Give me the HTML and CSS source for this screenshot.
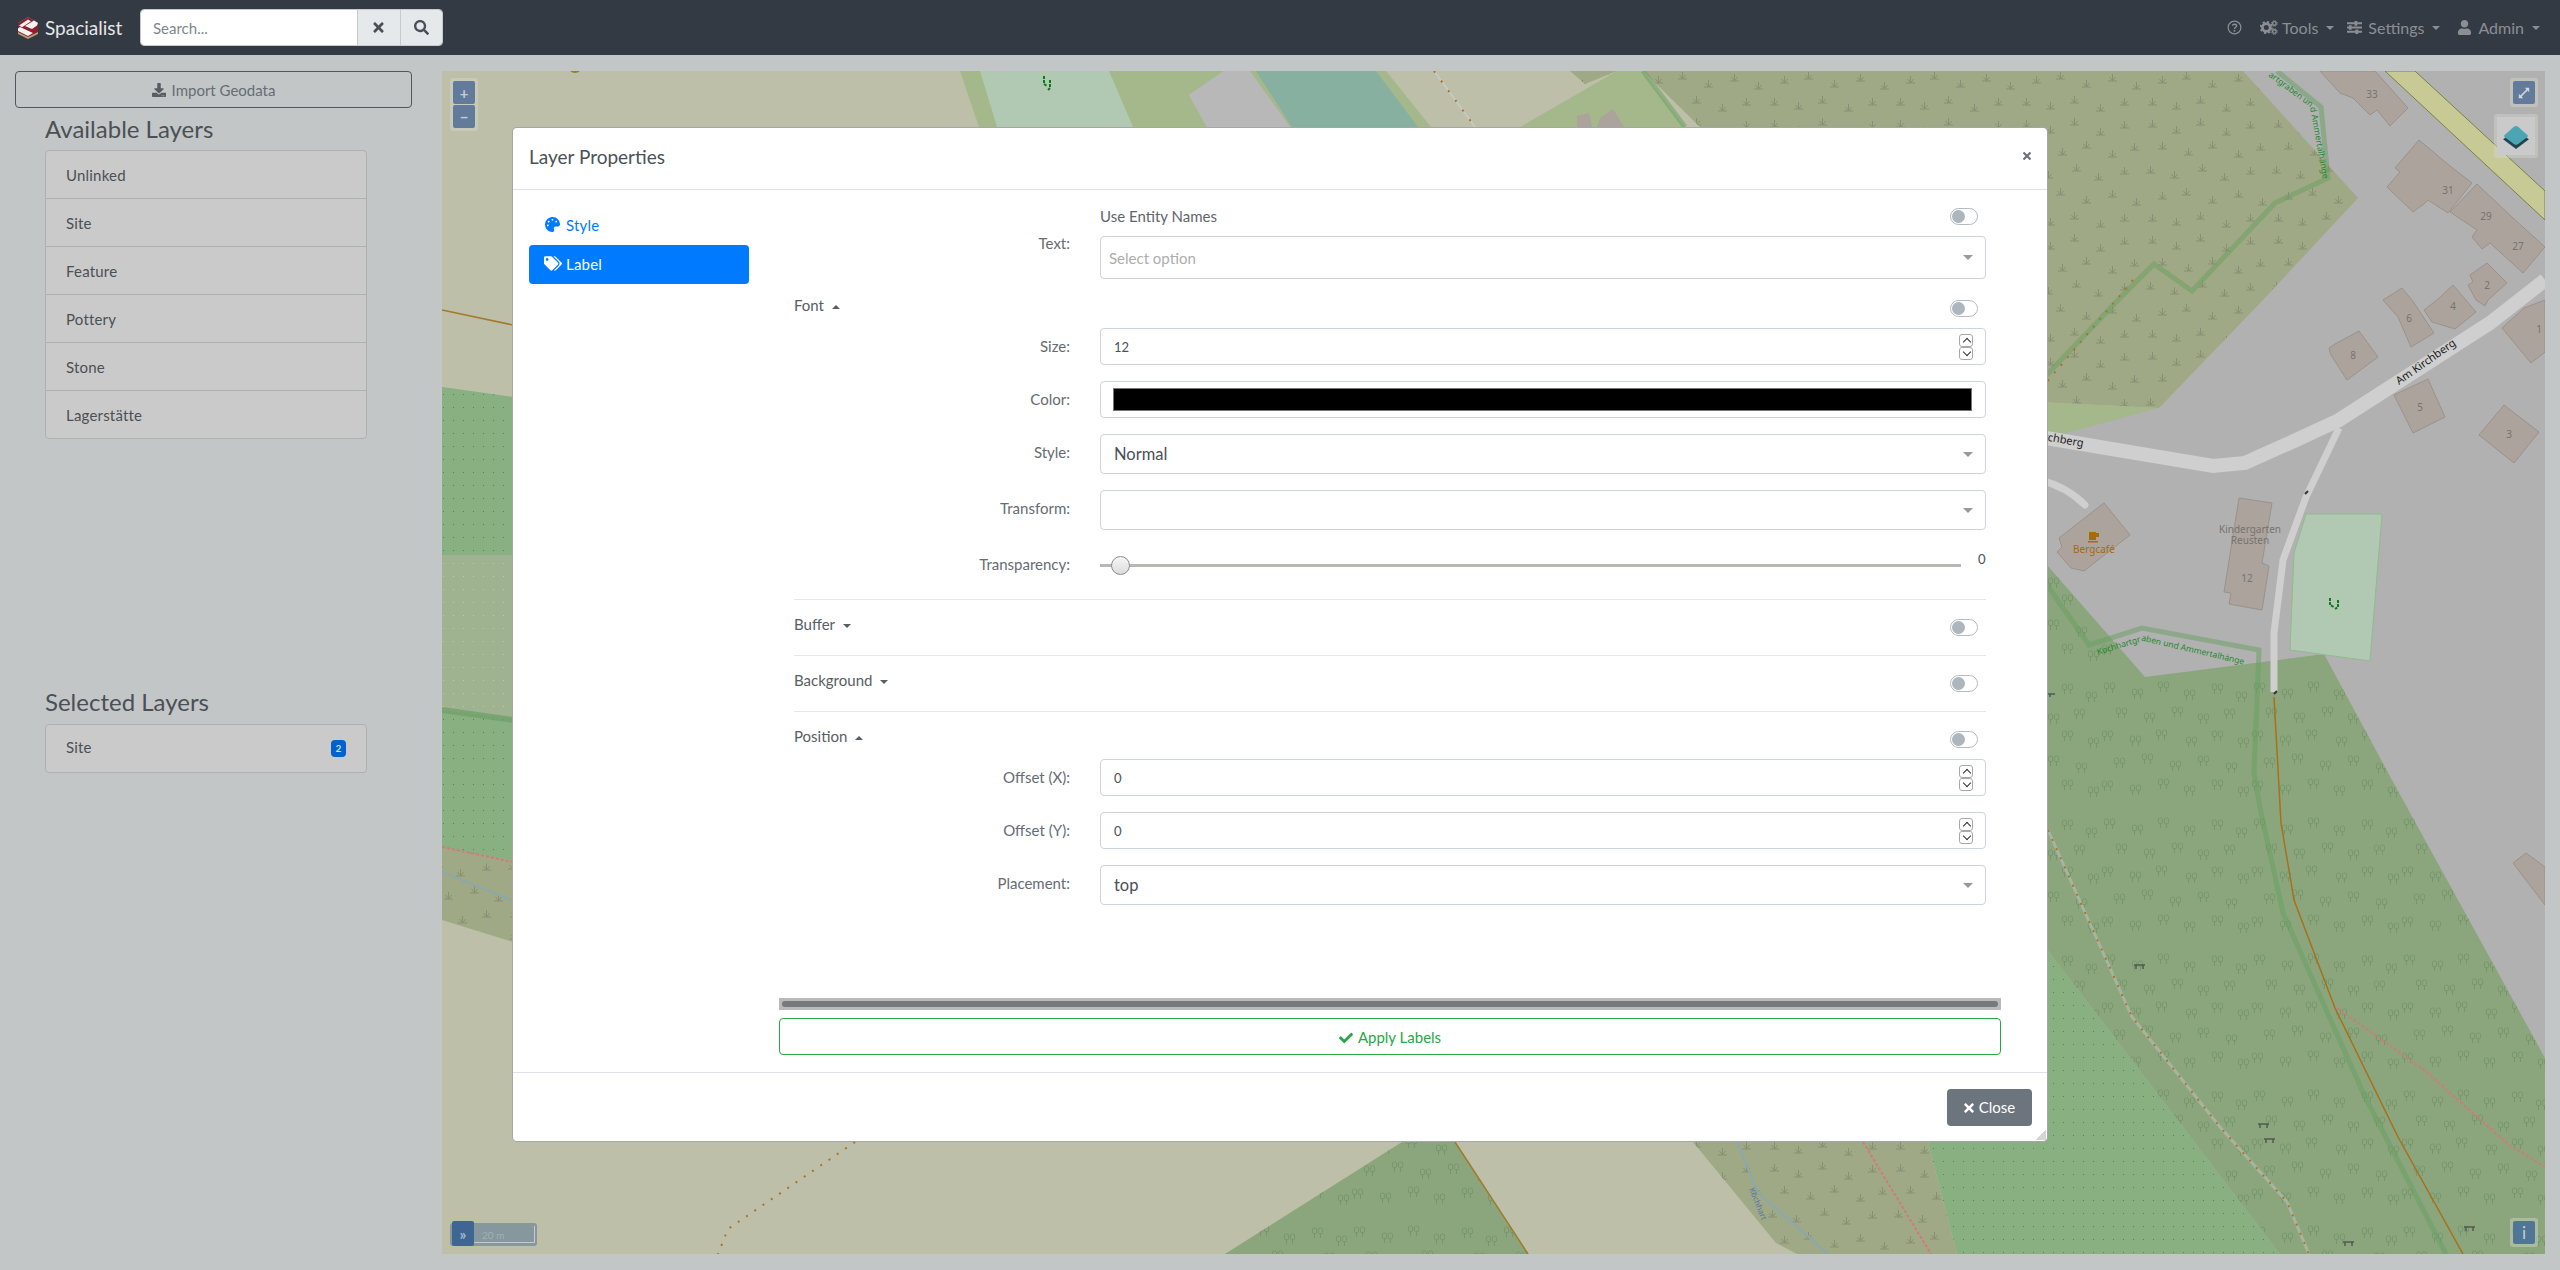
FILE: index.html
```html
<!DOCTYPE html>
<html lang="en">
<head>
    <meta charset="UTF-8">
    <meta name="viewport" content="width=device-width, initial-scale=1.0">
    <title>Spacialist</title>
    <link rel="stylesheet" href="styles.css">
</head>
<body>
    <svg class="icon-defs" width="0" height="0">
        <symbol id="i-times" viewBox="0 0 352 512"><path d="M242.72 256l100.07-100.07c12.28-12.28 12.28-32.19 0-44.48l-22.24-22.24c-12.28-12.28-32.19-12.28-44.48 0L176 189.28 75.93 89.21c-12.28-12.28-32.19-12.28-44.48 0L9.21 111.45c-12.28 12.28-12.28 32.19 0 44.48L109.28 256 9.21 356.07c-12.28 12.28-12.28 32.19 0 44.48l22.24 22.24c12.28 12.28 32.2 12.28 44.48 0L176 322.72l100.07 100.07c12.28 12.28 32.2 12.28 44.48 0l22.24-22.24c12.28-12.28 12.28-32.19 0-44.48L242.72 256z"/></symbol>
        <symbol id="i-search" viewBox="0 0 512 512"><path d="M505 442.7L405.3 343c-4.5-4.5-10.6-7-17-7H372c27.6-35.3 44-79.7 44-128C416 93.1 322.9 0 208 0S0 93.1 0 208s93.1 208 208 208c48.3 0 92.7-16.4 128-44v16.3c0 6.4 2.5 12.5 7 17l99.7 99.7c9.4 9.4 24.6 9.4 33.9 0l28.3-28.3c9.4-9.4 9.4-24.6.1-34zM208 336c-70.7 0-128-57.2-128-128 0-70.7 57.2-128 128-128 70.7 0 128 57.2 128 128 0 70.7-57.2 128-128 128z"/></symbol>
        <symbol id="i-check" viewBox="0 0 512 512"><path d="M173.898 439.404l-166.4-166.4c-9.997-9.997-9.997-26.206 0-36.204l36.203-36.204c9.997-9.998 26.207-9.998 36.204 0L192 312.69 432.095 72.596c9.997-9.997 26.207-9.997 36.204 0l36.203 36.204c9.997 9.997 9.997 26.206 0 36.204l-294.4 294.401c-9.998 9.997-26.207 9.997-36.204-.001z"/></symbol>
        <symbol id="i-user" viewBox="0 0 448 512"><path d="M224 256c70.7 0 128-57.3 128-128S294.7 0 224 0 96 57.3 96 128s57.3 128 128 128zm89.6 32h-16.7c-22.2 10.2-46.9 16-72.9 16s-50.6-5.8-72.9-16h-16.7C60.2 288 0 348.2 0 422.4V464c0 26.5 21.5 48 48 48h352c26.5 0 48-21.5 48-48v-41.6c0-74.2-60.2-134.4-134.4-134.4z"/></symbol>
        <symbol id="i-download" viewBox="0 0 512 512"><path d="M216 0h80c13.3 0 24 10.7 24 24v168h87.7c17.8 0 26.7 21.5 14.1 34.1L269.7 378.3c-7.5 7.5-19.8 7.5-27.3 0L90.1 226.1c-12.6-12.6-3.7-34.1 14.1-34.1H192V24c0-13.3 10.7-24 24-24zm296 376v112c0 13.3-10.7 24-24 24H24c-13.3 0-24-10.7-24-24V376c0-13.3 10.7-24 24-24h146.7l49 49c20.1 20.1 52.5 20.1 72.6 0l49-49H488c13.3 0 24 10.7 24 24zm-124 88c0-11-9-20-20-20s-20 9-20 20 9 20 20 20 20-9 20-20zm64 0c0-11-9-20-20-20s-20 9-20 20 9 20 20 20 20-9 20-20z"/></symbol>
        <symbol id="i-palette" viewBox="0 0 512 512"><path d="M204.3 5C104.9 24.4 24.8 104.3 5.2 203.4c-37 187 131.7 326.4 258.8 306.7 41.2-6.4 61.4-54.6 42.5-91.7-23.1-45.4 9.9-98.4 60.9-98.4h79.7c35.8 0 64.8-29.6 64.9-65.3C511.5 97.1 368.1-26.9 204.3 5zM96 320c-17.7 0-32-14.3-32-32s14.3-32 32-32 32 14.3 32 32-14.3 32-32 32zm32-128c-17.7 0-32-14.3-32-32s14.3-32 32-32 32 14.3 32 32-14.3 32-32 32zm128-64c-17.7 0-32-14.3-32-32s14.3-32 32-32 32 14.3 32 32-14.3 32-32 32zm128 64c-17.7 0-32-14.3-32-32s14.3-32 32-32 32 14.3 32 32-14.3 32-32 32z"/></symbol>
        <symbol id="i-tags" viewBox="0 0 640 512"><path d="M497.941 225.941L286.059 14.059A48 48 0 0 0 252.118 0H48C21.49 0 0 21.49 0 48v204.118a48 48 0 0 0 14.059 33.941l211.882 211.882c18.744 18.745 49.136 18.746 67.882 0l204.118-204.118c18.745-18.745 18.745-49.137 0-67.882zM112 160c-26.51 0-48-21.49-48-48s21.49-48 48-48 48 21.49 48 48-21.49 48-48 48zm513.941 133.823L421.823 497.941c-18.745 18.745-49.137 18.745-67.882 0l-.36-.36L527.64 323.522c16.999-16.999 26.36-39.6 26.36-63.64s-9.362-46.641-26.36-63.64L331.397 0h48.721a48 48 0 0 1 33.941 14.059l211.882 211.882c18.745 18.745 18.745 49.137 0 67.882z"/></symbol>
        <symbol id="i-sliders" viewBox="0 0 16 14"><path d="M0 1.5h8V0h3v1.5h5v2h-5V5H8V3.500H0zM0 6h2V4.700h3V6h11v2H5v1.300H2V8H0zM0 10.500h9V9.200h3v1.300h4v2h-4V14H9v-1.500H0z"/></symbol>
        <symbol id="i-cogs" viewBox="0 0 20 16">
            <circle cx="7" cy="8" r="4.300" fill="none" stroke="currentColor" stroke-width="3"/>
            <circle cx="7" cy="8" r="6.300" fill="none" stroke="currentColor" stroke-width="2" stroke-dasharray="2.400 2.550"/>
            <circle cx="16" cy="3.500" r="2" fill="none" stroke="currentColor" stroke-width="1.500"/>
            <circle cx="16" cy="3.500" r="3.200" fill="none" stroke="currentColor" stroke-width="1" stroke-dasharray="1.400 1.110"/>
            <circle cx="16" cy="12.500" r="2" fill="none" stroke="currentColor" stroke-width="1.500"/>
            <circle cx="16" cy="12.500" r="3.200" fill="none" stroke="currentColor" stroke-width="1" stroke-dasharray="1.400 1.110"/>
        </symbol>
    </svg>

    <header class="navbar">
        <a class="brand">
            <svg class="logo" viewBox="0 0 20 22">
                <path d="M10 0L20 6v11l-10 5L0 17V6z" fill="#b8a06e"/>
                <path d="M10 0L20 6v9l-10 5L0 15V6z" fill="#8e1f31"/>
                <path d="M1 8.500L10 2.500l3 1.800L4 10.300zM0 11.500L2 10l13 6-5 3-10-5zM7 9l9-5.500 4 2.500-1 2.500-5 3.500z" fill="#f4f2ee"/>
            </svg>
            Spacialist
        </a>
        <div class="search-box">
            <input class="search-input" type="text" placeholder="Search...">
            <button class="search-btn"><svg class="icon"><use href="#i-times"/></svg></button>
            <button class="search-btn"><svg class="icon"><use href="#i-search"/></svg></button>
        </div>
        <nav class="nav-right">
            <a class="nav-item nav-help">
                <svg class="nav-icon" viewBox="0 0 16 16"><circle cx="8" cy="8" r="6.800" fill="none" stroke="currentColor" stroke-width="1.300"/><path d="M5.800 6.200C6 3.900 10.200 3.900 10.200 6.200 10.200 7.800 8 7.700 8 9.600" fill="none" stroke="currentColor" stroke-width="1.500"/><rect x="7.100" y="10.600" width="1.800" height="1.800"/></svg>
            </a>
            <a class="nav-item nav-tools"><svg class="nav-icon nav-icon-wide"><use href="#i-cogs"/></svg>Tools<span class="caret"></span></a>
            <a class="nav-item nav-settings"><svg class="nav-icon"><use href="#i-sliders"/></svg>Settings<span class="caret"></span></a>
            <a class="nav-item"><svg class="nav-icon nav-icon-user"><use href="#i-user"/></svg>Admin<span class="caret"></span></a>
        </nav>
    </header>

    <main class="page">
        <aside class="sidebar">
            <button class="import-btn"><svg class="icon"><use href="#i-download"/></svg>Import Geodata</button>
            <section class="layers">
                <h4>Available Layers</h4>
                <ul class="layer-list">
                    <li>Unlinked</li>
                    <li>Site</li>
                    <li>Feature</li>
                    <li>Pottery</li>
                    <li>Stone</li>
                    <li>Lagerstätte</li>
                </ul>
            </section>
            <section class="layers layers-selected">
                <h4>Selected Layers</h4>
                <ul class="layer-list">
                    <li>Site<span class="badge">2</span></li>
                </ul>
            </section>
        </aside>

        <div class="map">
            <!-- map tiles, coordinates are page pixels -->
            <svg class="map-canvas" viewBox="442 71 2103 1183" preserveAspectRatio="none">
                <defs>
                    <g id="tuft"><path d="M0 7h9M4.500 7V0M4.500 7L1.500 3M4.500 7L7.500 3" fill="none" stroke="#879074" stroke-width="1"/></g>
                    <g id="tree"><path d="M2.500 11V6M8.500 11V6" fill="none" stroke="#76966c"/><ellipse cx="2.500" cy="4" rx="2.300" ry="3.200" fill="none" stroke="#76966c"/><ellipse cx="8.500" cy="4" rx="2.300" ry="3.200" fill="none" stroke="#76966c"/></g>
                    <pattern id="scrub" width="126" height="116" patternUnits="userSpaceOnUse">
                        <use href="#tuft" x="6" y="4"/><use href="#tuft" x="30" y="10"/><use href="#tuft" x="54" y="2"/><use href="#tuft" x="80" y="12"/><use href="#tuft" x="104" y="5"/>
                        <use href="#tuft" x="16" y="26"/><use href="#tuft" x="42" y="32"/><use href="#tuft" x="66" y="25"/><use href="#tuft" x="92" y="34"/><use href="#tuft" x="114" y="27"/>
                        <use href="#tuft" x="4" y="50"/><use href="#tuft" x="28" y="55"/><use href="#tuft" x="56" y="48"/><use href="#tuft" x="78" y="57"/><use href="#tuft" x="104" y="51"/>
                        <use href="#tuft" x="16" y="76"/><use href="#tuft" x="40" y="72"/><use href="#tuft" x="66" y="80"/><use href="#tuft" x="92" y="74"/><use href="#tuft" x="116" y="82"/>
                        <use href="#tuft" x="6" y="98"/><use href="#tuft" x="30" y="102"/><use href="#tuft" x="54" y="96"/><use href="#tuft" x="80" y="104"/><use href="#tuft" x="104" y="98"/>
                    </pattern>
                    <pattern id="forest" width="150" height="136" patternUnits="userSpaceOnUse">
                        <use href="#tree" x="4" y="2"/><use href="#tree" x="32" y="8"/><use href="#tree" x="58" y="1"/><use href="#tree" x="84" y="9"/><use href="#tree" x="112" y="3"/><use href="#tree" x="136" y="11"/>
                        <use href="#tree" x="16" y="27"/><use href="#tree" x="44" y="32"/><use href="#tree" x="72" y="26"/><use href="#tree" x="98" y="33"/><use href="#tree" x="124" y="28"/>
                        <use href="#tree" x="2" y="50"/><use href="#tree" x="30" y="55"/><use href="#tree" x="56" y="49"/><use href="#tree" x="86" y="56"/><use href="#tree" x="112" y="50"/><use href="#tree" x="138" y="57"/>
                        <use href="#tree" x="14" y="77"/><use href="#tree" x="42" y="73"/><use href="#tree" x="70" y="80"/><use href="#tree" x="98" y="75"/><use href="#tree" x="126" y="82"/>
                        <use href="#tree" x="2" y="100"/><use href="#tree" x="30" y="104"/><use href="#tree" x="58" y="98"/><use href="#tree" x="84" y="105"/><use href="#tree" x="112" y="99"/><use href="#tree" x="138" y="106"/>
                    </pattern>
                    <pattern id="dots" width="10" height="13" patternUnits="userSpaceOnUse">
                        <rect x="3" y="4" width="1" height="1" fill="#5d7f5b"/>
                    </pattern>
                    <pattern id="dots-light" width="10" height="13" patternUnits="userSpaceOnUse">
                        <rect x="3" y="4" width="1" height="1" fill="#bccab0"/>
                    </pattern>
                </defs>

                <rect x="442" y="71" width="2103" height="1183" fill="#bdbfa9"/>
                <rect x="2040" y="71" width="505" height="1183" fill="#b1b1b1"/>

                <!-- left of the modal -->
                <path d="M442 387L513 397V1000H442z" fill="#88b080"/>
                <path d="M442 387L513 397V560H442z" fill="url(#dots)"/>
                <path d="M442 555H513V718L442 710z" fill="#9fb391"/>
                <path d="M442 555H513V718L442 710z" fill="url(#dots-light)"/>
                <path d="M442 710L513 718V860L442 847z" fill="url(#dots)"/>
                <path d="M442 847L513 860V942L442 920z" fill="#a0a985"/>
                <path d="M442 847L513 860V942L442 920z" fill="url(#scrub)"/>
                <path d="M513 942V1000H442V920z" fill="#bdbfa9"/>
                <path d="M442 710L513 720" stroke="#6fa068" stroke-width="6" stroke-opacity=".7" fill="none"/>
                <path d="M442 872L513 901" stroke="#8aa8b0" stroke-width="2" fill="none"/>
                <path d="M442 847L513 862" stroke="#d07a7a" stroke-width="2" stroke-dasharray="3 2" fill="none"/>
                <path d="M442 310L513 325" stroke="#a27a2c" stroke-width="1.500" fill="none"/>

                <!-- strip above the modal -->
                <path d="M960 71H1224L1189 95 1207 127H979z" fill="#a4b88b"/>
                <path d="M980 71H1109L1133 127H997z" fill="#b1c9b2"/>
                <path d="M1224 71H1256L1292 127H1207L1189 95z" fill="#b8b8b8"/>
                <path d="M1250 71H1386L1431 127H1290z" fill="#a4b88b"/>
                <path d="M1256 71H1376L1418 127H1292z" fill="#88b0a0"/>
                <path d="M1434 71L1475 127" stroke="#c9c9c0" stroke-width="2" fill="none"/>
                <path d="M1434 71L1475 127" stroke="#a9732b" stroke-width="2" stroke-dasharray="2 10" fill="none"/>
                <path d="M1617 71H1643L1685 127H1520z" fill="#a4b88b"/>
                <path d="M1570 71H1617L1585 84z" fill="#a0a985"/>
                <path d="M1577 116L1589 113 1592 127H1577zM1597 127L1600 118 1613 109 1624 127z" fill="#aca39c"/>
                <path d="M1044 76v8l3 2M1050 80v8l-2 2" stroke="#0d7a1e" stroke-width="2" stroke-dasharray="3 1" fill="none"/>

                <!-- scrub on the right -->
                <path d="M1643 71H2243L2358 198 2263 300 2159 408 2040 402 1700 127z" fill="#a0a985"/>
                <path d="M1643 71H2243L2358 198 2263 300 2159 408 2040 402 1700 127zM1570 71H1617L1585 84z" fill="url(#scrub)"/>
                <path d="M2040 402L2159 408 2040 440z" fill="#a4b88b"/>

                <!-- forest and meadow -->
                <path d="M2040 557L2145 677 2324 654 2392 780 2545 1058V1254H2280L2040 940z" fill="#8ba67d"/>
                <path d="M2040 557L2145 677 2324 654 2392 780 2545 1058V1254H2280L2040 940z" fill="url(#forest)"/>
                <path d="M2040 940L2280 1254H1957L1928 1142H2040z" fill="#88b080"/>
                <path d="M2040 940L2280 1254H1957L1928 1142H2040z" fill="url(#dots)"/>

                <!-- strip below the modal -->
                <path d="M1693 1142H1928L1957 1254H1797L1776 1243z" fill="#a0a985"/>
                <path d="M1693 1142H1928L1957 1254H1797L1776 1243z" fill="url(#scrub)"/>
                <path d="M1402 1142H1455L1528 1254H1225z" fill="#8ba67d"/>
                <path d="M1402 1142H1455L1528 1254H1225z" fill="url(#forest)"/>
                <path d="M1455 1142L1528 1254" stroke="#a27a2c" stroke-width="1.500" fill="none"/>
                <path d="M1737 1142L1758 1193 1828 1254" stroke="#8aa8b0" stroke-width="2" fill="none"/>
                <path d="M1863 1142L1931 1254" stroke="#d07a7a" stroke-width="2" stroke-dasharray="3 2" fill="none"/>
                <path d="M855 1142L728 1229 718 1254" stroke="#a9732b" stroke-width="2" stroke-dasharray="2 8" fill="none"/>
                <text class="map-label map-label-water" transform="translate(1749 1189) rotate(68)">Kochhart</text>

                <!-- roads -->
                <path d="M2385 71H2415L2545 191V220z" fill="#c8ca95" stroke="#7d7f48" stroke-width="1"/>
                <path d="M2040 437L2213 466 2245 463 2294 441 2339 420 2490 323 2545 280" stroke="#cfcfcf" stroke-width="14" fill="none"/>
                <path d="M2040 480C2060 485 2075 495 2085 505" stroke="#cfcfcf" stroke-width="7" stroke-linecap="round" fill="none"/>
                <path d="M2339 428L2306 497 2283 560 2274 633V692" stroke="#cfcfcf" stroke-width="7" fill="none"/>
                <path d="M2274 697L2281 823 2294 900 2335 1008 2398 1137 2463 1254" stroke="#a8701e" stroke-width="1.500" fill="none"/>
                <path d="M2337 1008L2424 1070 2509 1145 2545 1167" stroke="#d07a7a" stroke-width="2" stroke-dasharray="3 2" fill="none"/>
                <path d="M2048 830L2087 917 2132 1017 2220 1127 2287 1202 2309 1254" stroke="#a8b3a0" stroke-width="3" fill="none"/>
                <path d="M2048 830L2087 917 2132 1017 2220 1127 2287 1202 2309 1254" stroke="#a9732b" stroke-width="2" stroke-dasharray="2 8" fill="none"/>

                <!-- nature reserve line -->
                <g class="reserve-line">
                    <path d="M2277 71L2321 107 2328 178 2275 203 2192 291 2154 264 2120 298 2040 382"/>
                    <path d="M2040 575L2089 645 2142 628 2259 650 2254 773 2261 813 2283 913 2365 1097 2446 1254"/>
                    <path d="M1643 71L1685 127"/>
                </g>
                <path d="M2133 280L2040 390" stroke="#a9732b" stroke-width="2" stroke-dasharray="2 8" fill="none"/>

                <path d="M2306 514H2382L2370 661 2290 650 2294 553z" fill="#b1c9b2" stroke="#8fbb8f"/>

                <!-- buildings -->
                <g class="buildings">
                    <path d="M2320 71L2340 93 2353 98 2370 115 2377 110 2390 126 2408 108 2375 71z"/>
                    <path d="M2419 140L2450 166 2472 183 2448 213 2428 200 2425 203 2413 212 2387 187 2400 172 2395 168z"/>
                    <path d="M2477 184L2513 218 2545 247 2523 273 2490 243 2482 249 2472 237 2477 230 2450 212z"/>
                    <path d="M2487 263L2507 283 2488 300 2485 306 2476 300 2468 285 2473 282 2470 275z"/>
                    <path d="M2402 288L2412 300 2434 333 2411 347 2398 317 2383 300z"/>
                    <path d="M2453 285L2476 312 2455 329 2432 322 2424 310 2437 300z"/>
                    <path d="M2502 328L2524 308 2545 300V352L2531 363z"/>
                    <path d="M2359 331L2378 357 2347 380 2331 355 2329 348 2335 344z"/>
                    <path d="M2428 379L2445 417 2413 433 2394 395z"/>
                    <path d="M2504 405L2539 432 2514 463 2479 435z"/>
                    <path d="M2104 503L2130 535 2084 571 2071 568 2057 552 2062 547 2059 538z"/>
                    <path d="M2239 498L2272 503 2262 563 2269 566 2262 610 2229 604 2231 593 2224 592z"/>
                    <path d="M2526 853L2545 867V905L2513 863z"/>
                </g>
                <g class="map-label map-label-house">
                    <text x="2372" y="98">33</text><text x="2448" y="194">31</text><text x="2486" y="220">29</text>
                    <text x="2518" y="250">27</text><text x="2487" y="289">2</text><text x="2409" y="322">6</text>
                    <text x="2453" y="310">4</text><text x="2539" y="333">1</text><text x="2353" y="359">8</text>
                    <text x="2420" y="411">5</text><text x="2509" y="438">3</text><text x="2247" y="582">12</text>
                    <text x="2250" y="533">Kindergarten</text><text x="2250" y="544">Reusten</text>
                </g>
                <text class="map-label map-label-road" transform="translate(2399 385) rotate(-35)">Am Kirchberg</text>
                <text class="map-label map-label-road" text-anchor="end" transform="translate(2083 447) rotate(10)">Am Kirchberg</text>
                <path id="reserve-a" d="M2098 655L2143 641 2250 666" fill="none"/>
                <path id="reserve-b" d="M2268 76L2310 107 2323 180" fill="none"/>
                <text class="map-label map-label-reserve"><textPath href="#reserve-a">Kochhartgraben und Ammertalhänge</textPath></text>
                <text class="map-label map-label-reserve"><textPath href="#reserve-b">artgraben und Ammertalhänge</textPath></text>

                <!-- cafe -->
                <path d="M2089 532h7v8h-7zM2088 541h10v1.500h-10zM2096 533h3v4h-3z" fill="#a8690f"/>
                <text class="map-label map-label-cafe" x="2094" y="553">Bergcafé</text>

                <!-- small symbols -->
                <g class="benches">
                    <path d="M2134 965h11M2136 965v4M2143 965v4"/><path d="M2258 1124h11M2260 1124v4M2267 1124v4"/>
                    <path d="M2264 1139h11M2266 1139v4M2273 1139v4"/><path d="M2464 1227h11M2466 1227v4M2473 1227v4"/>
                    <path d="M2343 1242h11M2345 1242v4M2352 1242v4"/><path d="M2047 694h8M2050 694v3"/>
                </g>
                <path d="M2330 598v7l4 2M2338 600v7l-3 2" stroke="#0d7a1e" stroke-width="2" stroke-dasharray="3 1" fill="none"/>
                <circle cx="575" cy="66" r="7" fill="#8c8818"/>
                <circle cx="2410" cy="1261" r="7" fill="#8c8818"/>
                <path d="M2305 494l3-3M2274 694l3-3" stroke="#333" stroke-width="2"/>
            </svg>

            <div class="map-ctrl map-zoom">
                <button class="map-btn">+</button>
                <button class="map-btn">−</button>
            </div>
            <div class="map-ctrl map-full">
                <button class="map-btn">
                    <svg viewBox="0 0 14 14" class="map-btn-icon"><path d="M8 1h5v5L11.200 4.200 4.200 11.200 6 13H1V8l1.800 1.800 7-7z"/></svg>
                </button>
            </div>
            <div class="map-ctrl map-layers">
                <div class="map-layers-inner">
                    <svg viewBox="0 0 26 26" class="map-layers-icon">
                        <path d="M13 8L25 16 13 25 1 16z" fill="#1e4452"/>
                        <path d="M3 11.500L11 4.500Q13 3 15 4.500L23 11.500Q25 13 23 14.500L15 20.500Q13 22 11 20.500L3 14.500Q1 13 3 11.500z" fill="#4ba5b3"/>
                    </svg>
                </div>
            </div>
            <div class="map-ctrl map-info"><button class="map-btn map-btn-dark">i</button></div>
            <div class="map-scale">
                <button class="map-scale-btn">»</button>
                <span class="map-scale-text">20 m</span>
            </div>
        </div>
    </main>

    <!-- Layer Properties dialog -->
    <div class="modal">
        <div class="modal-header">
            <h5>Layer Properties</h5>
            <svg class="modal-close"><use href="#i-times"/></svg>
        </div>
        <div class="modal-body">
            <ul class="pills">
                <li class="pill"><svg class="icon"><use href="#i-palette"/></svg>Style</li>
                <li class="pill active"><svg class="icon icon-tags"><use href="#i-tags"/></svg>Label</li>
            </ul>
            <div class="tab">
                <div class="tab-scroll">
                    <div class="form-row form-row-entity">
                        <span class="form-label"></span>
                        <div class="form-control-plain">
                            <span class="entity-text">Use Entity Names</span>
                            <span class="toggle"></span>
                        </div>
                    </div>
                    <div class="form-row form-row-text">
                        <label class="form-label">Text:</label>
                        <div class="input select select-tall"><span class="placeholder">Select option</span><span class="arrow"></span></div>
                    </div>

                    <div class="section-head section-head-open">
                        <span class="section-title">Font<span class="caret caret-up"></span></span>
                        <span class="toggle"></span>
                    </div>
                    <div class="form-row">
                        <label class="form-label">Size:</label>
                        <div class="input number">12<span class="spinner"><i class="up"></i><i class="down"></i></span></div>
                    </div>
                    <div class="form-row">
                        <label class="form-label">Color:</label>
                        <div class="input color"><span class="color-swatch"></span></div>
                    </div>
                    <div class="form-row form-row-select">
                        <label class="form-label">Style:</label>
                        <div class="input select"><span>Normal</span><span class="arrow"></span></div>
                    </div>
                    <div class="form-row form-row-select">
                        <label class="form-label">Transform:</label>
                        <div class="input select"><span></span><span class="arrow"></span></div>
                    </div>
                    <div class="form-row form-row-slider">
                        <label class="form-label">Transparency:</label>
                        <div class="slider"><span class="slider-track"><span class="slider-thumb"></span></span><span class="slider-value">0</span></div>
                    </div>

                    <hr>
                    <div class="section-head"><span class="section-title">Buffer<span class="caret"></span></span><span class="toggle"></span></div>
                    <hr>
                    <div class="section-head"><span class="section-title">Background<span class="caret"></span></span><span class="toggle"></span></div>
                    <hr>
                    <div class="section-head section-head-open"><span class="section-title">Position<span class="caret caret-up"></span></span><span class="toggle"></span></div>
                    <div class="form-row">
                        <label class="form-label">Offset (X):</label>
                        <div class="input number">0<span class="spinner"><i class="up"></i><i class="down"></i></span></div>
                    </div>
                    <div class="form-row">
                        <label class="form-label">Offset (Y):</label>
                        <div class="input number">0<span class="spinner"><i class="up"></i><i class="down"></i></span></div>
                    </div>
                    <div class="form-row form-row-select">
                        <label class="form-label">Placement:</label>
                        <div class="input select"><span>top</span><span class="arrow"></span></div>
                    </div>
                </div>
                <div class="scrollbar"><span class="scrollbar-thumb"></span></div>
                <button class="apply-btn"><svg class="icon"><use href="#i-check"/></svg>Apply Labels</button>
            </div>
        </div>
        <div class="modal-footer">
            <button class="close-btn"><svg class="icon"><use href="#i-times"/></svg>Close</button>
        </div>
        <span class="modal-resize"></span>
    </div>
</body>
</html>
```
FILE: styles.css
```css
* {
    box-sizing: border-box;
}
body {
    margin: 0;
    height: 100vh;
    overflow: hidden;
    display: flex;
    flex-direction: column;
    font-family: Lato, "Open Sans", sans-serif;
    font-size: 15px;
    color: #4b5055;
    background-color: #c2c6c7;
}
button {
    font-family: inherit;
    cursor: pointer;
}
ul {
    margin: 0;
    padding: 0;
    list-style: none;
}
.icon-defs {
    position: absolute;
}
.icon {
    width: 14px;
    height: 14px;
    fill: currentColor;
}

/* navbar */
.navbar {
    flex: none;
    height: 55px;
    display: flex;
    align-items: center;
    padding: 0 18px;
    background-color: #343a43;
}
.brand {
    display: flex;
    align-items: center;
    gap: 7px;
    width: 122px;
    font-size: 19px;
    color: #e6e7e8;
}
.logo {
    width: 20px;
    height: 22px;
}
.search-box {
    display: flex;
    height: 37px;
    width: 303px;
    border-radius: 4px;
    overflow: hidden;
    border: 1px solid #c5cacf;
}
.search-input {
    width: 216px;
    border: none;
    padding: 0 12px;
    font-family: inherit;
    font-size: 15px;
    background-color: white;
}
.search-input::placeholder {
    color: #7f868d;
}
.search-btn {
    flex: 1;
    padding: 0;
    border: none;
    border-left: 1px solid #c5cacf;
    background-color: #e6e9ec;
    color: #495057;
    display: flex;
    align-items: center;
    justify-content: center;
}
.search-btn .icon {
    width: 15px;
    height: 15px;
}
.nav-right {
    margin-left: auto;
    display: flex;
    align-items: center;
    gap: 14px;
    padding-right: 2px;
    font-size: 16px;
    color: #8b8f93;
}
.nav-item {
    display: flex;
    align-items: center;
}
.nav-help {
    margin-right: 4px;
}
.nav-tools {
    margin-right: -1px;
}
.nav-settings {
    margin-right: 3px;
}
.nav-icon {
    width: 15px;
    height: 15px;
    margin-right: 6px;
    fill: currentColor;
}
.nav-help .nav-icon {
    margin-right: 0;
}
.nav-icon-wide {
    width: 18px;
    margin-right: 4px;
}
.caret {
    display: inline-block;
    margin-left: 8px;
    border-left: 4.500px solid transparent;
    border-right: 4.500px solid transparent;
    border-top: 4.500px solid currentColor;
}
.caret-up {
    border-top: none;
    border-bottom: 4.500px solid currentColor;
}

/* page */
.page {
    flex: 1;
    min-height: 0;
    display: flex;
    padding: 16px 15px 16px 0;
}
.sidebar {
    flex: none;
    width: 442px;
    padding: 0 30px 0 15px;
}
.import-btn {
    width: 100%;
    height: 37px;
    border: 1px solid #50575d;
    border-radius: 4px;
    background: none;
    font-size: 15px;
    color: #666d74;
}
.import-btn .icon {
    margin-right: 6px;
    vertical-align: -1px;
    color: #575d63;
}
.layers {
    padding: 0 0 0 30px;
    width: 352px;
}
.layers h4 {
    margin: 6px 0 0;
    height: 36px;
    font-size: 24px;
    font-weight: 400;
    line-height: 30px;
}
.layers-selected {
    margin-top: 248px;
}
.layers-selected h4 {
    margin-top: 0;
    height: 37px;
}
.layer-list {
    border: 1px solid #aeb1b2;
    border-radius: 4px;
    background-color: #cacaca;
}
.layer-list li {
    height: 48px;
    display: flex;
    align-items: center;
    justify-content: space-between;
    padding: 0 20px;
    border-bottom: 1px solid #aeb1b2;
    font-size: 15px;
    letter-spacing: .2px;
}
.layer-list li:last-child {
    height: 47px;
    border-bottom: none;
}
.layers-selected .layer-list li {
    padding-bottom: 3px;
}
.badge {
    width: 15px;
    height: 17px;
    margin-top: 2px;
    border-radius: 4px;
    background-color: #0062cc;
    color: #d5dbe3;
    font-size: 10px;
    font-weight: 700;
    text-align: center;
    line-height: 17px;
    letter-spacing: 0;
}

/* map */
.map {
    flex: 1;
    position: relative;
    overflow: hidden;
}
.map-canvas {
    display: block;
    width: 100%;
    height: 100%;
}
.reserve-line path {
    fill: none;
    stroke: #67a05f;
    stroke-width: 5;
    stroke-opacity: .5;
}
.buildings path {
    fill: #aca39c;
    stroke: #9c918a;
    stroke-width: 1;
}
.benches path {
    fill: none;
    stroke: #55594f;
    stroke-width: 1.500;
}
.map-label {
    font-family: "Noto Sans", sans-serif;
    font-size: 10px;
}
.map-label-house text {
    fill: #767370;
    text-anchor: middle;
}
.map-label-road {
    font-size: 11px;
    fill: #1c1c1c;
}
.map-label-reserve {
    font-size: 8.500px;
    fill: #1c8a2c;
}
.map-label-water {
    font-size: 8px;
    fill: #5a78a6;
}
.map-label-cafe {
    fill: #a8690f;
    text-anchor: middle;
}
.map-ctrl {
    position: absolute;
    padding: 3px;
    border-radius: 3px;
    background-color: rgba(210, 212, 205, .45);
}
.map-btn {
    display: block;
    width: 22px;
    height: 23px;
    padding: 0;
    border: none;
    border-radius: 2px;
    background-color: #637b9b;
    color: #c8ccd2;
    font-size: 15px;
    font-weight: 700;
    line-height: 22px;
}
.map-zoom {
    left: 8px;
    top: 7px;
}
.map-zoom .map-btn + .map-btn {
    margin-top: 1px;
}
.map-full {
    right: 7px;
    top: 7px;
}
.map-btn-icon {
    display: block;
    width: 12px;
    height: 12px;
    margin: auto;
    fill: #d3d8de;
}
.map-layers {
    right: 7px;
    top: 43px;
}
.map-layers-inner {
    width: 38px;
    height: 38px;
    display: flex;
    align-items: center;
    justify-content: center;
    background-color: #cacaca;
}
.map-layers-icon {
    width: 28px;
    height: 28px;
}
.map-info {
    right: 7px;
    bottom: 7px;
}
.map-btn-dark {
    background-color: #4f7696;
    font-family: Lato, sans-serif;
    font-weight: 400;
    font-size: 17px;
}
.map-scale {
    position: absolute;
    left: 8px;
    bottom: 8px;
    width: 87px;
    height: 23px;
    display: flex;
    align-items: center;
    border-radius: 3px;
    background-color: #86979e;
}
.map-scale::after {
    content: "";
    position: absolute;
    left: 3px;
    right: 2px;
    top: 3px;
    bottom: 3px;
    border: 1px solid #c3cbcf;
    border-top: none;
}
.map-scale-btn {
    position: relative;
    z-index: 1;
    width: 22px;
    height: 25px;
    margin: -2px 8px 0 2px;
    padding: 0;
    border: none;
    border-radius: 2px;
    background-color: #3f6593;
    color: #a9bbd2;
    font-size: 15px;
    font-weight: 700;
    line-height: 20px;
}
.map-scale-text {
    font-size: 10px;
    color: #a4b0b5;
}

/* modal */
.modal {
    position: absolute;
    left: 512px;
    top: 127px;
    width: 1536px;
    height: 1015px;
    display: flex;
    flex-direction: column;
    border: 1px solid rgba(0, 0, 0, .35);
    border-radius: 5px;
    background-color: white;
}
.modal-header {
    flex: none;
    height: 62px;
    display: flex;
    align-items: center;
    justify-content: space-between;
    padding: 0 16px 4px 16px;
    border-bottom: 1px solid #dee2e6;
}
.modal-header h5 {
    margin: 0;
    font-size: 19px;
    font-weight: 400;
    color: #4b5157;
}
.modal-close {
    width: 8px;
    height: 12px;
    fill: #6b7178;
    margin-bottom: 2px;
}
.modal-body {
    flex: 1;
    min-height: 0;
    display: flex;
    padding: 0 46px 17px 16px;
}
.pills {
    flex: none;
    width: 220px;
    margin: 16px 30px 0 0;
}
.pill {
    height: 39px;
    display: flex;
    align-items: center;
    gap: 6px;
    padding: 0 15px 2px 16px;
    border-radius: 4px;
    color: #007bff;
    font-size: 15px;
    letter-spacing: .2px;
}
.pill .icon {
    width: 15px;
    height: 15px;
}
.pill .icon-tags {
    width: 18px;
    margin-left: -1px;
    margin-right: -2px;
}
.pill.active {
    background-color: #007bff;
    color: white;
}
.tab {
    flex: 1;
    min-width: 0;
    display: flex;
    flex-direction: column;
}
.tab-scroll {
    flex: 1;
    min-height: 0;
    padding: 18px 15px 0;
}
.form-row {
    display: flex;
    margin-bottom: 16px;
    height: 37px;
}
.form-row-entity {
    height: 17px;
    margin-bottom: 11px;
}
.form-row-text {
    height: 43px;
    margin-bottom: 21px;
}
.form-row-select {
    height: 40px;
}
.form-row-slider {
    height: 38px;
    margin-bottom: 15px;
}
.form-label {
    flex: none;
    width: 276px;
    margin-right: 30px;
    padding-top: 9px;
    text-align: right;
    font-size: 15px;
    color: #666c72;
}
.form-row-text .form-label {
    margin-top: -2px;
    padding-top: 0;
}
.form-row-slider .form-label {
    padding-top: 9px;
}
.form-control-plain {
    flex: 1;
    display: flex;
    justify-content: space-between;
    padding-right: 8px;
}
.entity-text {
    line-height: 16px;
    color: #5f656b;
}
.input {
    flex: 1;
    display: flex;
    align-items: center;
    justify-content: space-between;
    padding: 0 13px;
    border: 1px solid #ced4da;
    border-radius: 4px;
    font-size: 13px;
    color: #495057;
}
.select {
    font-size: 16.500px;
}
.select-tall {
    padding-left: 8px;
    font-size: 15px;
}
.placeholder {
    color: #adadad;
}
.arrow {
    margin-right: -1px;
    border-left: 5px solid transparent;
    border-right: 5px solid transparent;
    border-top: 5px solid #999;
}
.spinner {
    width: 14px;
    margin-right: -1px;
    display: flex;
    flex-direction: column;
}
.spinner i {
    height: 13px;
    border: 1px solid #a8a8a8;
    border-radius: 3px;
    position: relative;
}
.spinner i::after {
    content: "";
    position: absolute;
    left: 3.500px;
    width: 5px;
    height: 5px;
    border-left: 1.500px solid #333;
    border-top: 1.500px solid #333;
}
.spinner .up::after {
    top: 4px;
    transform: rotate(45deg);
}
.spinner .down::after {
    top: 1px;
    transform: rotate(225deg);
}
.color {
    padding: 0 13px 0 7px;
}
.color .color-swatch {
    flex: 1;
    height: 23px;
    margin-left: 5px;
    background-color: black;
    border: 1px solid #777;
}
.slider {
    flex: 1;
    display: flex;
    padding-top: 2px;
}
.slider-track {
    position: relative;
    width: 861px;
    height: 3px;
    margin-top: 16px;
    background-color: #b8b8b0;
}
.slider-thumb {
    position: absolute;
    left: 11px;
    top: -8px;
    width: 19px;
    height: 19px;
    border: 1px solid #8d8d8d;
    border-radius: 50%;
    background: linear-gradient(#f6f6f6, #dcdcdc);
}
.slider-value {
    margin-left: 17px;
    padding-top: 3px;
    font-size: 13px;
    color: #495057;
}
.toggle {
    position: relative;
    width: 28px;
    height: 17px;
    border: 1px solid #b3bac1;
    border-radius: 9px;
    background-color: white;
}
.toggle::after {
    content: "";
    position: absolute;
    left: 1px;
    top: 1px;
    width: 13px;
    height: 13px;
    border-radius: 50%;
    background-color: #adb5bd;
}
hr {
    margin: 0;
    border: none;
    border-top: 1px solid #e5e7ea;
}
.section-head {
    display: flex;
    justify-content: space-between;
    align-items: flex-start;
    height: 17px;
    padding-right: 8px;
    margin: 19px 0;
}
.section-head-open {
    margin-bottom: 11px;
}
.section-title {
    line-height: 11px;
    font-size: 15px;
    color: #585e64;
}
.section-title .caret {
    vertical-align: 2px;
}
.scrollbar {
    flex: none;
    height: 12px;
    padding: 3px;
    margin-bottom: 8px;
    background-color: #b9b9b9;
}
.scrollbar-thumb {
    display: block;
    height: 6px;
    border-radius: 3px;
    background-color: #777a7a;
}
.apply-btn {
    flex: none;
    height: 37px;
    padding: 0;
    border: 1px solid #28a745;
    border-radius: 4px;
    background-color: white;
    color: #28a745;
    font-size: 15px;
}
.apply-btn .icon {
    margin-right: 5px;
    vertical-align: -2px;
}
.modal-footer {
    flex: none;
    height: 69px;
    display: flex;
    justify-content: flex-end;
    align-items: flex-start;
    padding: 16px 15px 0;
    border-top: 1px solid #dee2e6;
}
.close-btn {
    width: 85px;
    height: 37px;
    padding: 0 0 2px;
    border: none;
    border-radius: 4px;
    background-color: #6c757d;
    color: white;
    font-size: 15px;
}
.close-btn .icon {
    width: 10px;
    margin-right: 5px;
    vertical-align: -2px;
}
.modal-resize {
    position: absolute;
    right: 1px;
    bottom: 1px;
    width: 10px;
    height: 10px;
    background: linear-gradient(135deg, transparent 50%, #d5d5d5 50%);
}
```
